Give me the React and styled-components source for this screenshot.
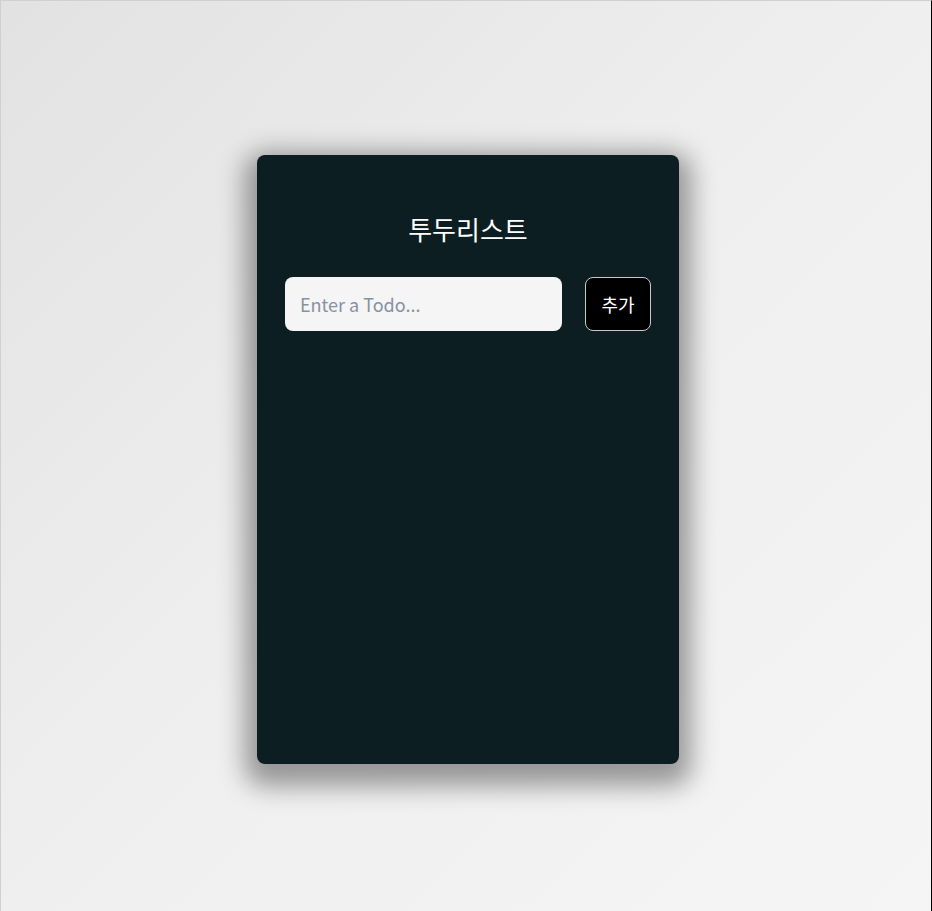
import React, { useState } from "react";
import styled, { createGlobalStyle } from "styled-components";

const GlobalStyle = createGlobalStyle`
  * {
    box-sizing: border-box;
  }
  html, body {
    margin: 0;
    padding: 0;
  }
  body {
    font-family: "Noto Sans CJK KR", "Noto Sans", sans-serif;
    background: linear-gradient(135deg, #e2e2e2 0%, #efefef 50%, #f5f5f5 100%);
    min-height: 100vh;
  }
`;

function App() {
  const [todo, setTodo] = useState("");
  const [todos, setTodos] = useState([]);

  const addTodo = (e) => {
    e.preventDefault();
    if (!todo.trim()) return;
    setTodos([...todos, { id: Date.now(), text: todo }]);
    setTodo("");
  };

  return (
    <Page>
      <GlobalStyle />
      <Card>
        <Title>투두리스트</Title>
        <TodoForm onSubmit={addTodo}>
          <TodoInput
            placeholder="Enter a Todo..."
            value={todo}
            onChange={(e) => setTodo(e.target.value)}
          />
          <AddButton type="submit">추가</AddButton>
        </TodoForm>
        <TodoList>
          {todos.map((item) => (
            <TodoItem key={item.id}>{item.text}</TodoItem>
          ))}
        </TodoList>
      </Card>
    </Page>
  );
}

export default App;

const Page = styled.div`
  height: 100vh;
  display: flex;
  justify-content: center;
  align-items: flex-start;
  padding: 155px 0 0 4px;
  border-top: 1px solid #d0d0d0;
  border-left: 1px solid #d0d0d0;
  border-right: 1px solid #000;
`;

const Card = styled.div`
  width: 422px;
  height: 609px;
  margin-top: -1px;
  background-color: #0d1e23;
  border-radius: 8px;
  padding: 56px 28px 28px;
  box-shadow: 0 10px 26px 12px rgba(0, 0, 0, 0.38);
  display: flex;
  flex-direction: column;
`;

const Title = styled.h1`
  margin: 0 0 30px;
  text-align: center;
  color: #ffffff;
  font-size: 26px;
  font-weight: 400;
  line-height: 1.4;
`;

const TodoForm = styled.form`
  display: flex;
  gap: 23px;
`;

const TodoInput = styled.input`
  width: 277px;
  height: 54px;
  border: none;
  outline: none;
  border-radius: 8px;
  background-color: #f5f5f5;
  padding: 0 15px;
  font-family: inherit;
  font-size: 18px;
  color: #222;

  &::placeholder {
    color: #8592a3;
  }
`;

const AddButton = styled.button`
  width: 66px;
  height: 54px;
  padding: 0;
  background-color: #000;
  color: #fff;
  border: 1px solid #c9c9c9;
  border-radius: 8px;
  font-family: inherit;
  font-size: 18px;
  cursor: pointer;
`;

const TodoList = styled.ul`
  list-style: none;
  margin: 20px 0 0;
  padding: 0;
`;

const TodoItem = styled.li`
  color: #fff;
  padding: 8px 0;
`;
